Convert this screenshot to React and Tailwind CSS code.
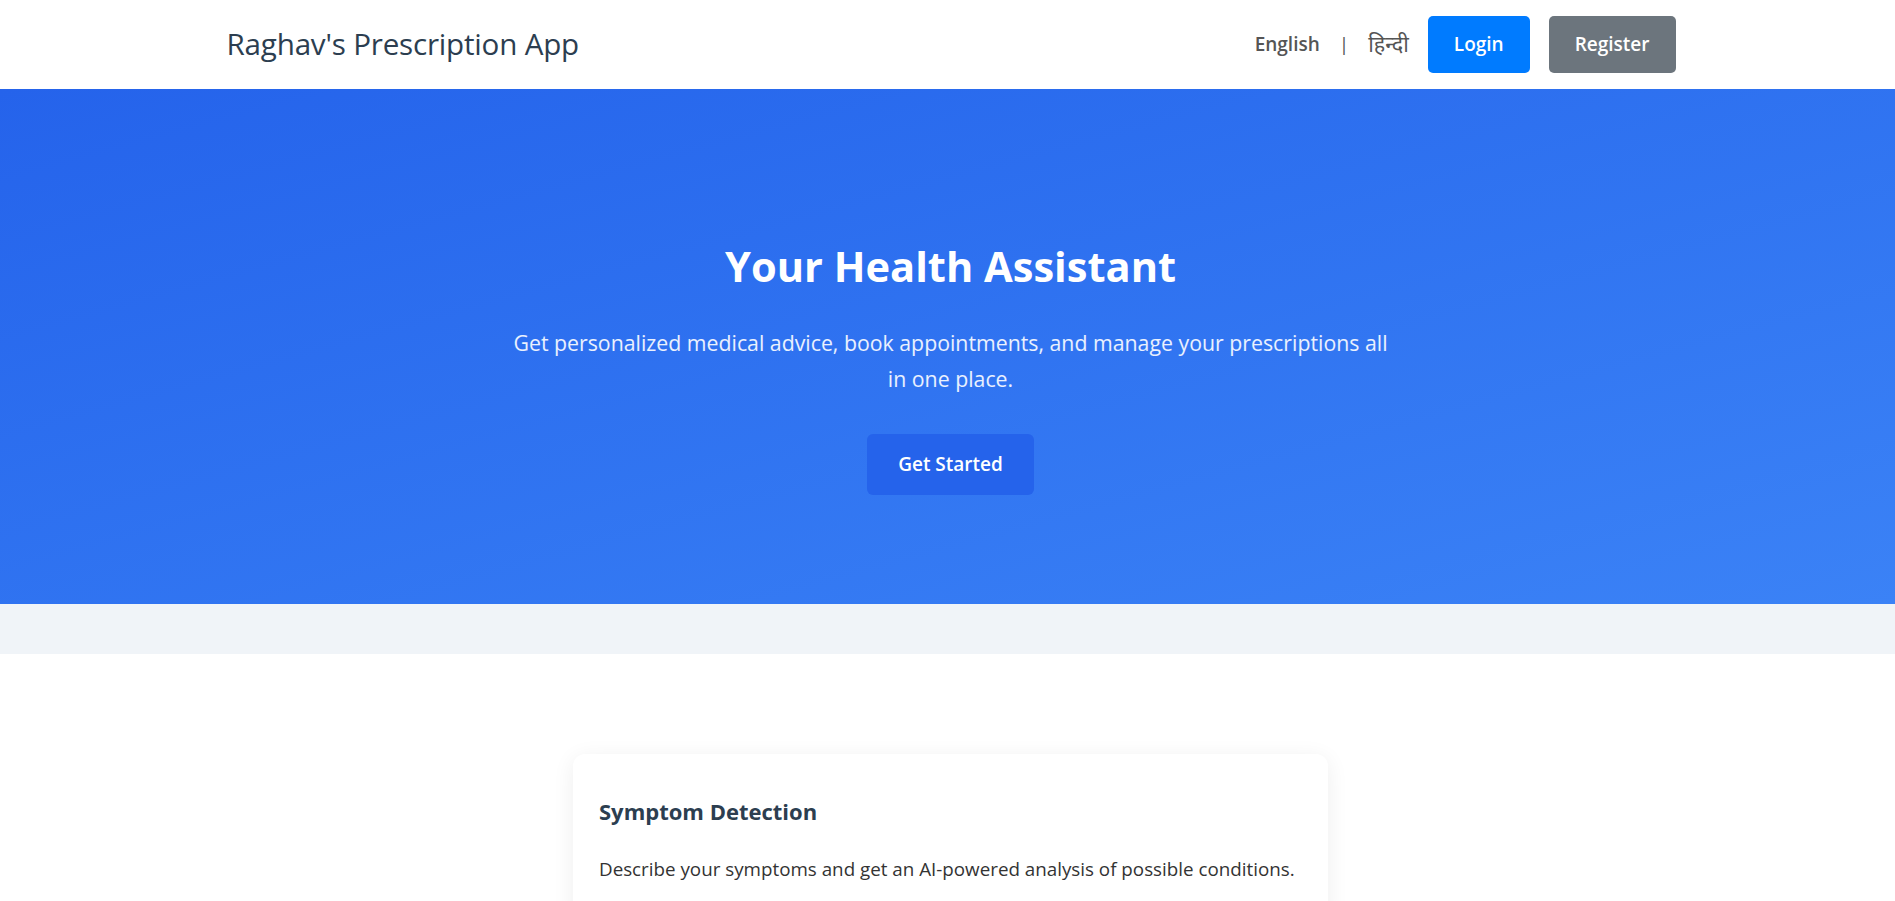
import { useState } from "react";

const font = { fontFamily: "'Open Sans', 'Noto Sans', 'Noto Sans Devanagari', sans-serif" };

function Header({ lang, setLang }) {
  return (
    <header className="bg-white">
      <div className="mx-auto flex h-[89px] w-[80%] items-center justify-between pl-[37px] pr-[30px]">
        <h1 className="text-[29.6px] font-medium tracking-[-0.2px] text-[#2c3e50]">
          Raghav's Prescription App
        </h1>
        <nav className="flex items-center gap-[19px]">
          <button
            onClick={() => setLang("en")}
            className="text-[19px] font-semibold text-[#555]"
          >
            English
          </button>
          <span className="text-[19px] text-[#555]">|</span>
          <button
            onClick={() => setLang("hi")}
            className="text-[21.5px] text-[#555]"
          >
            हिन्दी
          </button>
          <button className="h-[57px] rounded-[5px] bg-[#007bff] px-[26px] text-[19px] font-semibold text-white hover:bg-[#0069d9]">
            Login
          </button>
          <button className="h-[57px] rounded-[5px] bg-[#6c757d] px-[26px] text-[19px] font-semibold text-white hover:bg-[#5a6268]">
            Register
          </button>
        </nav>
      </div>
    </header>
  );
}

function Hero() {
  return (
    <section className="bg-linear-to-br from-[#2563eb] to-[#3b82f6] pt-[151px] pb-[109px] text-center text-white">
      <div className="pl-[6px]">
        <h2 className="text-[41.6px] font-bold leading-[53px]">
          Your Health Assistant
        </h2>
        <p className="mx-auto mt-8 max-w-[890px] text-[21.3px] leading-[36px] text-white/90">
          Get personalized medical advice, book appointments, and manage your
          prescriptions all in one place.
        </p>
        <button className="mt-[37px] h-[61px] rounded-[6px] bg-[#2563eb] px-[31px] text-[19px] font-semibold hover:bg-[#1d4ed8]">
          Get Started
        </button>
      </div>
    </section>
  );
}

function FeatureCard({ title, text }) {
  return (
    <div className="mx-auto w-[755px] rounded-[12px] bg-white pl-[26px] pr-[10px] pt-[44px] pb-10 shadow-[0_4px_22px_rgba(0,0,0,0.07)]">
      <h3 className="text-[22px] font-bold leading-[26px] text-[#2c3e50]">
        {title}
      </h3>
      <p className="mt-[30px] text-[18.8px] leading-[30px] text-[#333]">
        {text}
      </p>
    </div>
  );
}

export default function App() {
  const [lang, setLang] = useState("en");

  return (
    <div style={font} className="min-h-screen bg-white">
      <Header lang={lang} setLang={setLang} />
      <Hero />
      <div className="h-[50px] bg-[#f0f4f8]" />
      <section className="pt-[100px] pb-16 pl-[6px]">
        <FeatureCard
          title="Symptom Detection"
          text="Describe your symptoms and get an AI-powered analysis of possible conditions."
        />
      </section>
    </div>
  );
}
